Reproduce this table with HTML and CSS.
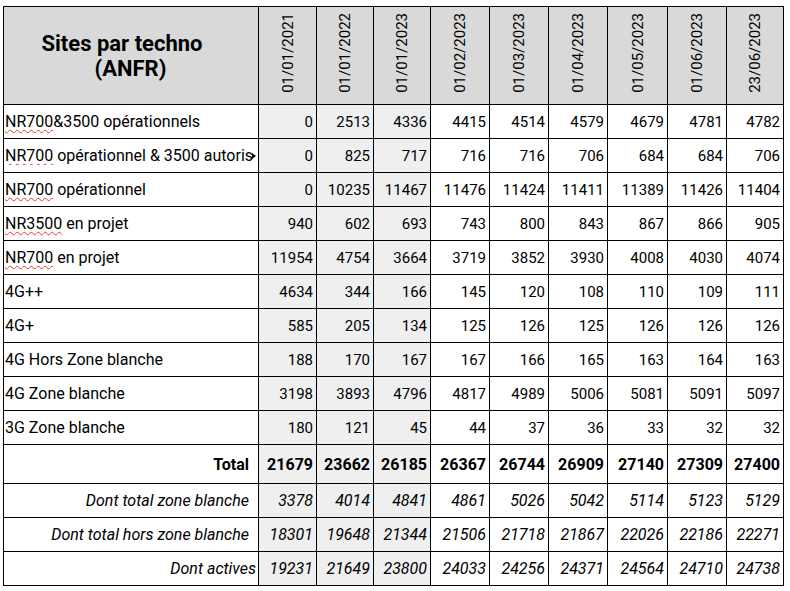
FILE: index.html
```html
<!DOCTYPE html>
<html lang="fr">
<head>
<meta charset="utf-8">
<title>Sites par techno (ANFR)</title>
<link rel="stylesheet" href="styles.css">
</head>
<body>
<table class="sheet">
  <colgroup>
    <col class="c-label">
    <col class="c58"><col class="c57"><col class="c57">
    <col class="c59"><col class="c59"><col class="c59">
    <col class="c60"><col class="c59"><col class="c57">
  </colgroup>
  <thead>
    <tr class="head">
      <th class="title"><span class="t1">Sites par techno</span><span class="t2">(ANFR)</span></th>
      <th class="date"><span>01/01/2021</span></th>
      <th class="date"><span>01/01/2022</span></th>
      <th class="date"><span>01/01/2023</span></th>
      <th class="date"><span>01/02/2023</span></th>
      <th class="date"><span>01/03/2023</span></th>
      <th class="date"><span>01/04/2023</span></th>
      <th class="date"><span>01/05/2023</span></th>
      <th class="date"><span>01/06/2023</span></th>
      <th class="date"><span>23/06/2023</span></th>
    </tr>
  </thead>
  <tbody>
    <tr class="row"><td class="lab"><span class="sp">NR700</span>&amp;3500 opérationnels</td><td class="g">0</td><td class="g">2513</td><td class="g">4336</td><td>4415</td><td>4514</td><td>4579</td><td>4679</td><td>4781</td><td>4782</td></tr>
    <tr class="row"><td class="lab"><div class="clip"><span class="sp">NR700</span> opérationnel &amp; 3500 autoris</div><span class="more"></span></td><td class="g">0</td><td class="g">825</td><td class="g">717</td><td>716</td><td>716</td><td>706</td><td>684</td><td>684</td><td>706</td></tr>
    <tr class="row"><td class="lab"><span class="sp">NR700</span> opérationnel</td><td class="g">0</td><td class="g">10235</td><td class="g">11467</td><td>11476</td><td>11424</td><td>11411</td><td>11389</td><td>11426</td><td>11404</td></tr>
    <tr class="row"><td class="lab"><span class="sp">NR3500</span> en projet</td><td class="g">940</td><td class="g">602</td><td class="g">693</td><td>743</td><td>800</td><td>843</td><td>867</td><td>866</td><td>905</td></tr>
    <tr class="row"><td class="lab"><span class="sp">NR700</span> en projet</td><td class="g">11954</td><td class="g">4754</td><td class="g">3664</td><td>3719</td><td>3852</td><td>3930</td><td>4008</td><td>4030</td><td>4074</td></tr>
    <tr class="row"><td class="lab">4G++</td><td class="g">4634</td><td class="g">344</td><td class="g">166</td><td>145</td><td>120</td><td>108</td><td>110</td><td>109</td><td>111</td></tr>
    <tr class="row"><td class="lab">4G+</td><td class="g">585</td><td class="g">205</td><td class="g">134</td><td>125</td><td>126</td><td>125</td><td>126</td><td>126</td><td>126</td></tr>
    <tr class="row"><td class="lab">4G Hors Zone blanche</td><td class="g">188</td><td class="g">170</td><td class="g">167</td><td>167</td><td>166</td><td>165</td><td>163</td><td>164</td><td>163</td></tr>
    <tr class="row"><td class="lab">4G Zone blanche</td><td class="g">3198</td><td class="g">3893</td><td class="g">4796</td><td>4817</td><td>4989</td><td>5006</td><td>5081</td><td>5091</td><td>5097</td></tr>
    <tr class="row"><td class="lab">3G Zone blanche</td><td class="g">180</td><td class="g">121</td><td class="g">45</td><td>44</td><td>37</td><td>36</td><td>33</td><td>32</td><td>32</td></tr>
    <tr class="row total"><td class="lab r pad">Total</td><td class="g">21679</td><td class="g">23662</td><td class="g">26185</td><td>26367</td><td>26744</td><td>26909</td><td>27140</td><td>27309</td><td>27400</td></tr>
    <tr class="row sub"><td class="lab r pad">Dont total zone blanche</td><td class="g">3378</td><td class="g">4014</td><td class="g">4841</td><td>4861</td><td>5026</td><td>5042</td><td>5114</td><td>5123</td><td>5129</td></tr>
    <tr class="row sub"><td class="lab r pad">Dont total hors zone blanche</td><td class="g">18301</td><td class="g">19648</td><td class="g">21344</td><td>21506</td><td>21718</td><td>21867</td><td>22026</td><td>22186</td><td>22271</td></tr>
    <tr class="row sub"><td class="lab r">Dont actives</td><td class="g">19231</td><td class="g">21649</td><td class="g">23800</td><td>24033</td><td>24256</td><td>24371</td><td>24564</td><td>24710</td><td>24738</td></tr>
  </tbody>
</table>
</body>
</html>
```

FILE: styles.css
```css
html, body {
  margin: 0;
  padding: 0;
  background: #ffffff;
}
body {
  padding: 6px 0 0 3px;
  font-family: Roboto, "Liberation Sans", Arial, sans-serif;
  color: #000000;
}
.sheet {
  border-collapse: collapse;
  table-layout: fixed;
  width: 781px;
  font-size: 15px;
}
.c-label { width: 255px; }
.c57 { width: 57px; }
.c58 { width: 58px; }
.c59 { width: 59px; }
.c60 { width: 60px; }

.sheet th,
.sheet td {
  border: 1px solid #000000;
  padding: 0 3px 0 2px;
  text-align: right;
  vertical-align: middle;
  white-space: nowrap;
}
.head { height: 98px; }
.head th {
  background: #d9d9d9;
}
.title {
  text-align: center !important;
  font-size: 22px;
  font-weight: 700;
  line-height: 25px;
  white-space: normal;
}
.t1,
.t2 {
  display: block;
}
.t1 {
  padding-right: 17px;
}
.date {
  text-align: center !important;
  font-weight: 400;
  padding: 0 !important;
}
.date span {
  display: inline-block;
  writing-mode: vertical-rl;
  transform: rotate(180deg);
  line-height: 18px;
  padding-top: 1px;
}
.row { height: 34px; }
.row.total { height: 39px; }
.g { background: #efefef; }
.lab {
  text-align: left !important;
  padding-left: 1px !important;
  font-size: 16px;
  position: relative;
}
.lab.r {
  text-align: right !important;
  padding-right: 2px !important;
}
.lab.r.pad {
  padding-right: 9px !important;
}
.total td {
  font-weight: 700;
  font-size: 16px;
}
.sub td {
  font-style: italic;
  font-size: 16px;
}
.sp {
  text-decoration: underline wavy #e53935;
  text-decoration-thickness: 1px;
  text-underline-offset: 2px;
}
.clip {
  overflow: hidden;
  width: 250px;
}
.more {
  position: absolute;
  right: 2px;
  top: 50%;
  margin-top: -3px;
  width: 0;
  height: 0;
  border-top: 3px solid transparent;
  border-bottom: 3px solid transparent;
  border-left: 4px solid #000000;
}
```
